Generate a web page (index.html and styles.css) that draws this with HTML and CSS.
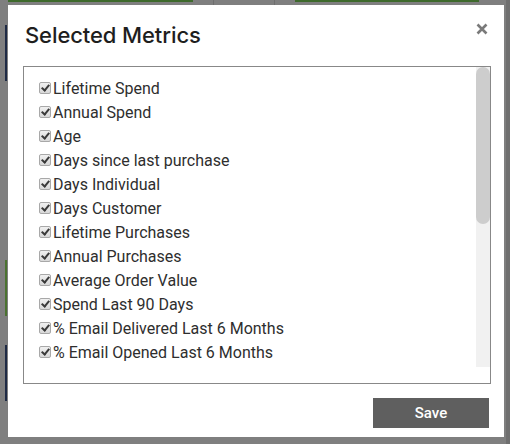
FILE: index.html
```html
<!DOCTYPE html>
<html>
<head>
<meta charset="utf-8">
<link rel="stylesheet" href="styles.css">
</head>
<body>
<div class="modal">
  <div class="header">
    <h1 class="title">Selected Metrics</h1>
    <button class="close" aria-label="Close">
      <svg width="12" height="12" viewBox="0 0 12 12"><path d="M1.5 1.5 L10.5 10.5 M10.5 1.5 L1.5 10.5" stroke="#7a7a7a" stroke-width="2.6" stroke-linecap="butt"/></svg>
    </button>
  </div>
  <div class="box">
    <div class="list">
      <label class="item"><span class="cb"></span>Lifetime Spend</label>
      <label class="item"><span class="cb"></span>Annual Spend</label>
      <label class="item"><span class="cb"></span>Age</label>
      <label class="item"><span class="cb"></span>Days since last purchase</label>
      <label class="item"><span class="cb"></span>Days Individual</label>
      <label class="item"><span class="cb"></span>Days Customer</label>
      <label class="item"><span class="cb"></span>Lifetime Purchases</label>
      <label class="item"><span class="cb"></span>Annual Purchases</label>
      <label class="item"><span class="cb"></span>Average Order Value</label>
      <label class="item"><span class="cb"></span>Spend Last 90 Days</label>
      <label class="item"><span class="cb"></span>% Email Delivered Last 6 Months</label>
      <label class="item"><span class="cb"></span>% Email Opened Last 6 Months</label>
    </div>
    <div class="scrollbar"><div class="thumb"></div></div>
  </div>
  <div class="footer">
    <button class="save">Save</button>
  </div>
</div>
</body>
</html>
```

FILE: styles.css
```css
html, body {
  margin: 0;
  padding: 0;
}
body {
  width: 510px;
  height: 444px;
  overflow: hidden;
  background-color: #7f7f7f;
  background-image:
    linear-gradient(#3e6a2c, #3e6a2c),
    linear-gradient(#3e6a2c, #3e6a2c),
    linear-gradient(#6e6e6e, #6e6e6e),
    linear-gradient(#6e6e6e, #6e6e6e),
    linear-gradient(#1e2a44, #1e2a44),
    linear-gradient(#4a7230, #4a7230),
    linear-gradient(#1e2a44, #1e2a44),
    linear-gradient(#6f6f6f, #6f6f6f);
  background-size:
    185px 2px,
    184px 2px,
    1px 6px,
    1px 6px,
    2px 56px,
    2px 56px,
    2px 56px,
    4px 444px;
  background-position:
    8px 0,
    295px 0,
    213px 0,
    274px 0,
    5px 25px,
    5px 260px,
    5px 345px,
    506px 0;
  background-repeat: no-repeat;
  font-family: Roboto, "Liberation Sans", sans-serif;
  display: flex;
  flex-direction: column;
}
.modal {
  width: 496px;
  height: 432px;
  margin: 5px 0 0 8px;
  background: #fff;
  box-sizing: border-box;
  display: flex;
  flex-direction: column;
}
.header {
  display: flex;
  justify-content: space-between;
  align-items: flex-start;
  padding: 16px 16px 0 17px;
}
.title {
  margin: 0;
  font-family: Inter, "Noto Sans", sans-serif;
  font-weight: 500;
  font-size: 22px;
  line-height: 28px;
  color: #1e1e1e;
  letter-spacing: -0.1px;
}
.close {
  border: 0;
  background: none;
  padding: 0;
  width: 12px;
  height: 12px;
  margin-top: 2px;
  display: block;
  line-height: 0;
}
.close svg { display: block; }
.box {
  margin: 17px 13px 0 15px;
  height: 318px;
  border: 1px solid #888;
  box-sizing: border-box;
  display: flex;
  align-items: flex-start;
}
.list {
  flex: 1;
  padding: 9px 0 0 15px;
}
.scrollbar {
  width: 14px;
  height: 300px;
  background: #f1f1f1;
  flex: none;
}
.thumb {
  height: 157px;
  background: #cdcdcd;
  border-radius: 7px;
}
.item {
  display: flex;
  align-items: center;
  height: 24px;
  font-size: 16px;
  color: #2e2e2e;
}
.cb {
  width: 12px;
  height: 12px;
  box-sizing: border-box;
  border: 1px solid #a8a8a8;
  border-radius: 2px;
  background: linear-gradient(#f0f0f0, #d8d8d8);
  margin-right: 2px;
  position: relative;
  flex: none;
}
.cb::after {
  content: "";
  position: absolute;
  left: 3px;
  top: 0px;
  width: 3px;
  height: 6px;
  border: solid #3a3a3a;
  border-width: 0 2px 2px 0;
  transform: rotate(40deg);
}
.footer {
  display: flex;
  justify-content: flex-end;
  padding: 14px 15px 0 0;
}
.save {
  width: 116px;
  height: 30px;
  border: 0;
  background: #5f5f5f;
  color: #fff;
  font-family: Roboto, "Liberation Sans", sans-serif;
  font-weight: 500;
  font-size: 15px;
  padding: 0;
}
```
